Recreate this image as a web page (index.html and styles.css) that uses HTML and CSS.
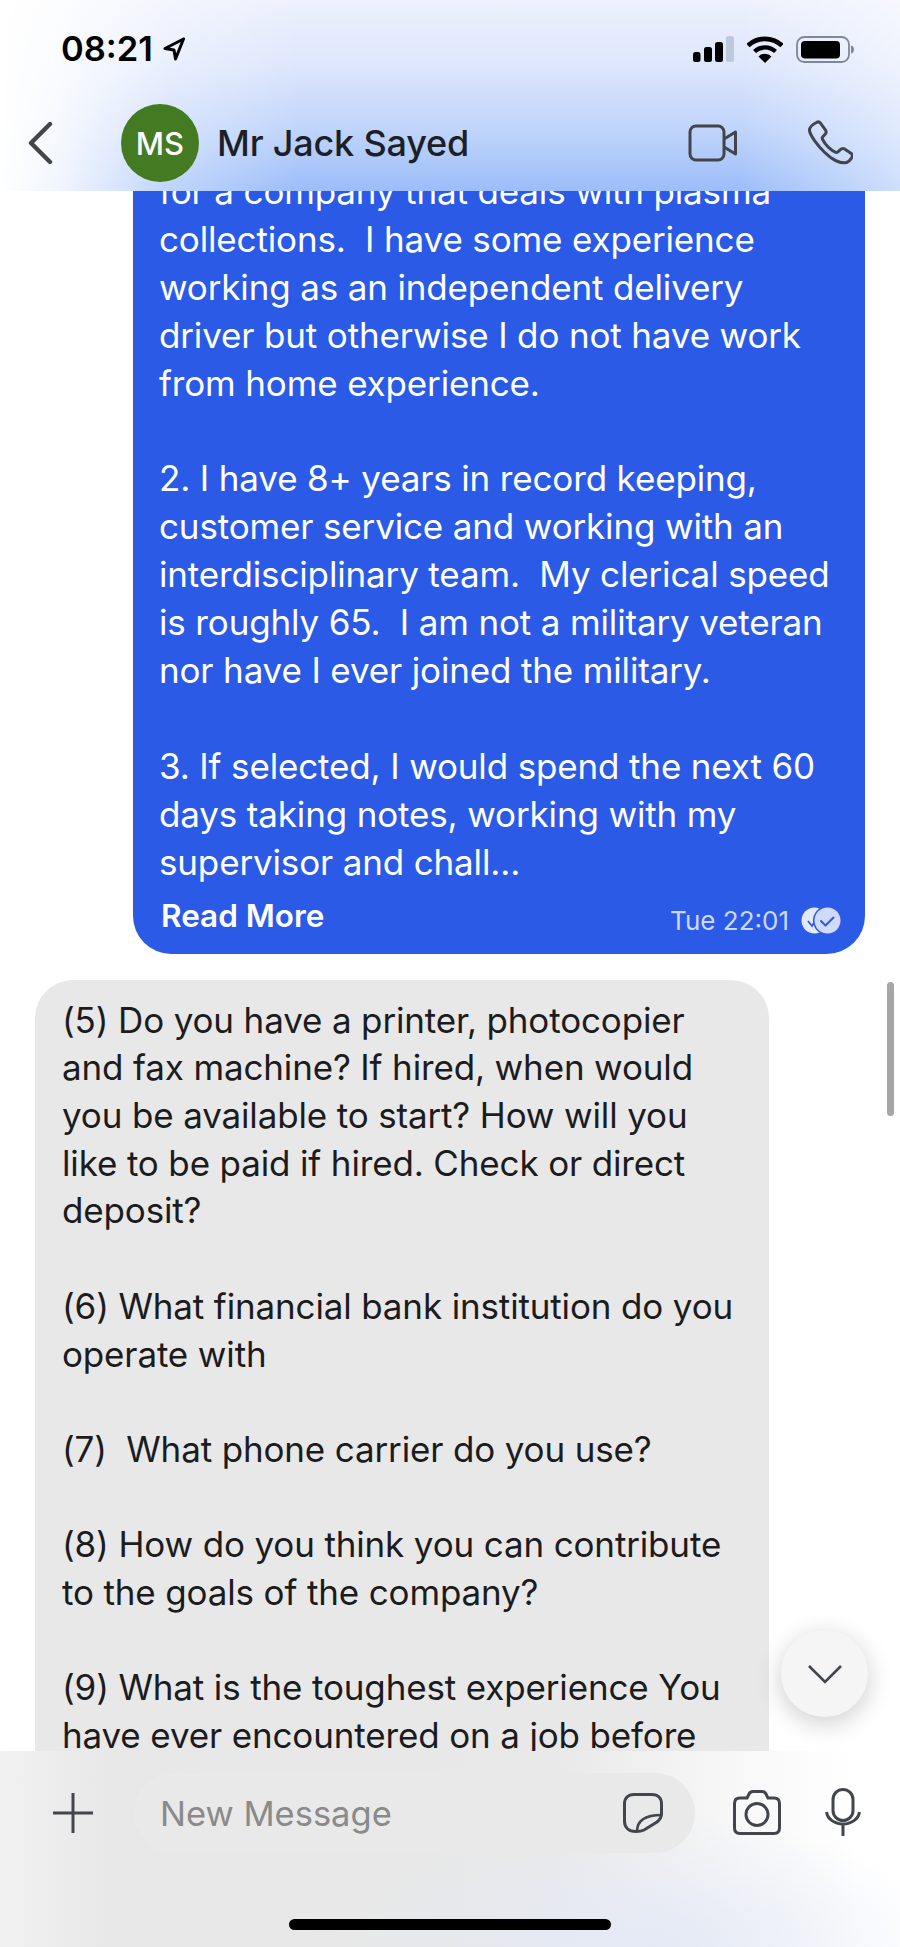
FILE: index.html
```html
<!DOCTYPE html>
<html lang="en">
<head>
<meta charset="utf-8">
<title>Mr Jack Sayed</title>
<link rel="stylesheet" href="styles.css">
</head>
<body>
<div class="app">
  <header class="header">
    <div class="status">
      <div class="clock"><span class="time">08:21</span>
        <svg class="loc" viewBox="0 0 22 24" width="22" height="24"><path d="M20.500 2 2 11.500l9 1.500 1.500 9z" fill="none" stroke="#000" stroke-width="3" stroke-linejoin="round"/></svg>
      </div>
      <div class="sys">
        <svg class="signal" viewBox="0 0 41 27" width="41" height="27"><rect x="0" y="16" width="7.500" height="10" rx="2.500"/><rect x="11" y="11" width="8" height="15" rx="2.500"/><rect x="22" y="6" width="8" height="20" rx="2.500"/><rect x="33" y="0" width="8" height="26" rx="2.500" fill="#bcc8dc"/></svg>
        <svg class="wifi" viewBox="0 0 36 27" width="36" height="27"><path d="M1 9.500a25 25 0 0 1 34 0" fill="none" stroke="#000" stroke-width="4.600"/><path d="M7.500 15.500a15.500 15.500 0 0 1 21 0" fill="none" stroke="#000" stroke-width="4.400"/><path d="M11.500 20.500a9 9 0 0 1 13 0L18 27z"/></svg>
        <svg class="battery" viewBox="0 0 58 28" width="58" height="28"><rect x="1" y="1" width="52" height="25" rx="7.500" fill="none" stroke="#7f8794" stroke-width="1.800"/><rect x="5" y="5" width="39" height="17.500" rx="4"/><path d="M55 9.500c2 .6 3 2 3 4s-1 3.400-3 4z" fill="#7f8794"/></svg>
      </div>
    </div>
    <div class="nav">
      <svg class="back" viewBox="0 0 26 44" width="26" height="44"><path d="M23 3 4 22l19 19" fill="none" stroke="#42454c" stroke-width="4.400" stroke-linecap="round" stroke-linejoin="round"/></svg>
      <div class="avatar">MS</div>
      <div class="name">Mr Jack Sayed</div>
      <svg class="video" viewBox="0 0 50 38" width="50" height="38"><rect x="2" y="2" width="34" height="34" rx="6" fill="none" stroke="#42454c" stroke-width="3"/><path d="M36 15 47.500 8v22L36 23" fill="none" stroke="#42454c" stroke-width="3" stroke-linejoin="round"/></svg>
      <svg class="phone" viewBox="0 0 46 46" width="46" height="46"><path d="M9.500 2.500c1.500-1 3-.6 4 .6l5 7c1 1.400.7 3-.4 4.200l-2.300 2.500c-.7.800-.8 1.700-.2 2.700 2.700 5 7.500 10 12.600 12.700 1 .5 1.900.4 2.700-.3l2.500-2.300c1.200-1.100 2.800-1.400 4.200-.5l6.300 4.200c1.500 1 1.900 2.700.9 4.200-1.400 2.300-3.600 4.800-6.300 5.200-5.300.7-13.500-3-21-10.500C10.900 25.800 3 15.500 2.500 10.500 2.200 7 6.500 4 9.500 2.500z" fill="none" stroke="#42454c" stroke-width="3" stroke-linejoin="round"/></svg>
    </div>
  </header>
  <main class="chat">
    <div class="bubble out">
      <div class="lines">for a company that deals with plasma<br>collections.  I have some experience<br>working as an independent delivery<br>driver but otherwise I do not have work<br>from home experience.<br><br>2. I have 8+ years in record keeping,<br>customer service and working with an<br>interdisciplinary team.  My clerical speed<br>is roughly 65.  I am not a military veteran<br>nor have I ever joined the military.<br><br>3. If selected, I would spend the next 60<br>days taking notes, working with my<br>supervisor and chall...</div>
      <div class="meta">
        <span class="more">Read More</span>
        <span class="stamp">Tue 22:01
          <svg class="ticks" viewBox="0 0 40 27" width="40" height="27"><circle cx="13.500" cy="13.500" r="13" fill="#e3e9fd"/><path d="M7 14l4 5 5-8" fill="none" stroke="#2b5be6" stroke-width="1.800"/><circle cx="26.500" cy="13.500" r="14.500" fill="#2b5be6"/><circle cx="26.500" cy="13.500" r="13" fill="#cfdafc"/><path d="M20 14l4.500 4.500 8-8" fill="none" stroke="#2b5be6" stroke-width="2" stroke-linecap="round" stroke-linejoin="round"/></svg>
        </span>
      </div>
    </div>
    <div class="bubble in">
      <div class="lines">(5) Do you have a printer, photocopier<br>and fax machine? If hired, when would<br>you be available to start? How will you<br>like to be paid if hired. Check or direct<br>deposit?<br><br>(6) What financial bank institution do you<br>operate with<br><br>(7)  What phone carrier do you use?<br><br>(8) How do you think you can contribute<br>to the goals of the company?<br><br>(9) What is the toughest experience You<br>have ever encountered on a job before</div>
    </div>
    <div class="scrollbar"></div>
    <button class="down" type="button" aria-label="Scroll down">
      <svg viewBox="0 0 36 22" width="36" height="22"><path d="M2 3l16 16L34 3" fill="none" stroke="#42454c" stroke-width="2.600"/></svg>
    </button>
  </main>
  <footer class="footer">
    <div class="composer">
      <svg class="plus" viewBox="0 0 40 40" width="40" height="40"><path d="M20 0v40M0 20h40" stroke="#42454c" stroke-width="3"/></svg>
      <div class="field">
        <span class="placeholder">New Message</span>
        <svg class="sticker" viewBox="0 0 40 40" width="40" height="40"><path d="M13 38.500C5.500 38.500 1.500 34.500 1.500 28V11C1.500 5 5 1.500 11 1.500H29C35 1.500 38.500 5 38.500 11V21C38.500 25 37 26.500 34 29L21 37C18 38.500 16 38.500 13 38.500Z" fill="none" stroke="#42454c" stroke-width="3" stroke-linejoin="round"/><path d="M14 38.500C14 27 22 22 38.500 22" fill="none" stroke="#42454c" stroke-width="2.600"/></svg>
      </div>
      <svg class="camera" viewBox="0 0 48 45" width="48" height="45"><path d="M7 8h7l2-4c.8-1.500 2-2.500 4-2.500h9c2 0 3.200 1 4 2.500l2 4h6c3.500 0 5.500 2 5.500 5.500V38c0 3.500-2 5.500-5.500 5.500H7c-3.500 0-5.500-2-5.500-5.500V13.500C1.500 10 3.500 8 7 8z" fill="none" stroke="#42454c" stroke-width="3"/><circle cx="24" cy="24.500" r="11" fill="none" stroke="#42454c" stroke-width="3"/></svg>
      <svg class="mic" viewBox="0 0 36 48" width="36" height="48"><rect x="8" y="1.500" width="20" height="31" rx="10" fill="none" stroke="#42454c" stroke-width="3"/><path d="M1.500 24c1 7 8 12 16.500 12s15.500-5 16.500-12M18 36v12" fill="none" stroke="#42454c" stroke-width="3"/></svg>
    </div>
    <div class="home"></div>
  </footer>
</div>
</body>
</html>
```
FILE: styles.css
```css
* { box-sizing: border-box; }
html, body { margin: 0; padding: 0; background: #fff; }
body { font-family: Inter, "Liberation Sans", sans-serif; color: #1c1c1e; }
.app { width: 900px; height: 1947px; display: flex; flex-direction: column; overflow: hidden; }

.header {
  height: 191px; flex: none; position: relative; z-index: 2;
  background:
    linear-gradient(90deg, #fff 0, rgba(255,255,255,.85) 60px, rgba(255,255,255,.35) 170px, rgba(255,255,255,0) 300px, rgba(255,255,255,0) 740px, rgba(255,255,255,.5) 900px),
    linear-gradient(180deg, #eef1fc 0, #dde6fc 35%, #bed3fb 70%, #9cbdf9 100%);
}
.status { height: 100px; display: flex; justify-content: space-between; align-items: flex-start; padding: 34px 46px 0 61px; }
.clock { display: flex; align-items: center; gap: 10px; }
.time { font-size: 34.500px; line-height: 30px; font-weight: 600; color: #000; }
.sys { display: flex; align-items: flex-start; gap: 13px; padding-top: 2px; }
.nav { height: 91px; display: flex; align-items: center; padding: 0 0 5px 27px; }
.back { flex: none; }
.avatar { flex: none; width: 78px; height: 78px; margin-left: 68px; border-radius: 50%; background: #437a22; color: #fff; display: flex; align-items: center; justify-content: center; font-size: 31px; font-weight: 500; }
.name { margin-left: 18px; font-size: 36px; font-weight: 500; color: #1c1f26; flex: 1; letter-spacing: -.2px; }
.video { flex: none; margin-right: 69px; }
.phone { flex: none; margin-right: 47px; }

.chat { flex: 1; min-height: 0; position: relative; overflow: hidden; display: flex; flex-direction: column; gap: 26px; }
.bubble { flex: none; font-size: 35px; line-height: 47.700px; padding-left: 26px; }
.lines { white-space: pre; letter-spacing: -.15px; }
.out { width: 732px; align-self: flex-end; margin: -60px 35px 0 0; padding-top: 37px; padding-bottom: 13px; line-height: 47.900px; background: #2b5be6; color: #fff; border-radius: 0 0 38px 38px; }
.in { width: 734px; margin-left: 35px; padding-top: 17px; padding-bottom: 60px; background: #e8e8e8; color: #1c1c1e; border-radius: 38px 38px 0 0; padding-left: 27px; }
.meta { display: flex; justify-content: space-between; align-items: center; height: 50px; margin-top: 4px; padding-right: 24px; }
.more { font-size: 31.500px; font-weight: 600; margin-left: 2px; }
.stamp { display: flex; align-items: center; gap: 12px; font-size: 26px; color: #cdd9fb; padding-top: 10px; }
.scrollbar { position: absolute; left: 887px; top: 791px; width: 7px; height: 134px; border-radius: 4px; background: #a6a6a6; }
.down { position: absolute; left: 781px; top: 1439px; width: 87px; height: 87px; padding: 0; border: 0; border-radius: 50%; background: #f5f5f5; box-shadow: 0 6px 26px rgba(0,0,0,.2); display: flex; align-items: center; justify-content: center; }

.footer {
  height: 196px; flex: none; position: relative; z-index: 2;
  background:
    radial-gradient(ellipse 300px 130px at 650px 196px, #e4e9f6, rgba(228,233,246,0) 100%),
    linear-gradient(90deg, #f1f1f1 0, #e7e7e7 120px, #e9e9e9 560px, #f8f8f8 740px, #fff 860px);
  display: flex; flex-direction: column;
}
.composer { height: 168px; display: flex; align-items: flex-start; padding: 22px 39px 0 53px; }
.plus { flex: none; margin-top: 20px; }
.field { flex: none; width: 561px; height: 80px; margin-left: 41px; padding: 0 32px 0 26px; border-radius: 40px; background: #e9e9e9; display: flex; align-items: center; justify-content: space-between; }
.placeholder { font-size: 34.500px; color: #8a8a8a; }
.sticker { flex: none; }
.camera { flex: none; margin: 17px 0 0 38px; }
.mic { flex: none; margin: 15px 0 0 44px; }
.home { width: 322px; height: 11px; margin: 0 auto; border-radius: 6px; background: #000; }
```
